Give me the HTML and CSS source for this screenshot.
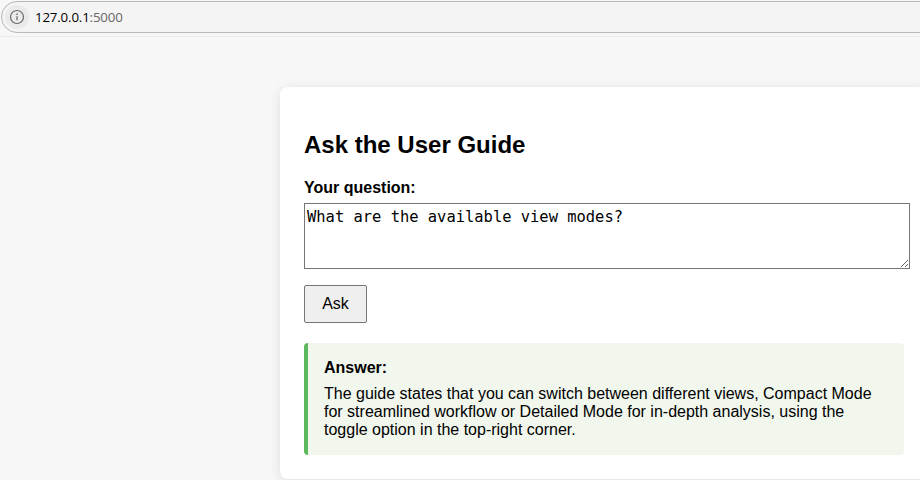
FILE: index.html
```html
<!DOCTYPE html>
<html lang="en">
<head>
<meta charset="utf-8">
<title>Ask the User Guide</title>
<link rel="stylesheet" href="styles.css">
</head>
<body>
<header class="toolbar">
  <div class="address">
    <span class="info">
      <svg width="16" height="16" viewBox="0 0 16 16" fill="none" stroke="#6b6b6b"><circle cx="8" cy="8" r="6.5" stroke-width="1.2"/><path d="M8 7.2v4" stroke-width="1.3"/><path d="M8 4.6v1.4" stroke-width="1.4"/></svg>
    </span>
    <span class="url">127.0.0.1<span class="port">:5000</span></span>
  </div>
</header>
<main class="card">
  <h2>Ask the User Guide</h2>
  <form>
    <label for="question">Your question:</label>
    <textarea id="question" spellcheck="false">What are the available view modes?</textarea>
    <button type="button">Ask</button>
  </form>
  <section class="answer">
    <strong>Answer:</strong>
    <p>The guide states that you can switch between different views, Compact Mode for streamlined workflow or Detailed Mode for in-depth analysis, using the toggle option in the top-right corner.</p>
  </section>
</main>
</body>
</html>
```
FILE: styles.css
```css
body {
  margin: 0;
  height: 480px;
  overflow: hidden;
  background: #f7f7f7;
  color: #000;
  font: 16px/18px "Liberation Sans", Arial, sans-serif;
}
.toolbar {
  box-sizing: border-box;
  height: 37px;
  padding-top: 1px;
  border-bottom: 1px solid #ebebeb;
  overflow: hidden;
}
.address {
  box-sizing: border-box;
  display: flex;
  align-items: center;
  gap: 6px;
  width: 960px;
  height: 32px;
  margin-left: 1px;
  padding-left: 3px;
  border: 1px solid #b8b8b8;
  border-radius: 16px;
  background: #f4f4f4;
}
.info {
  display: flex;
  align-items: center;
  justify-content: center;
  width: 24px;
  height: 24px;
  border-radius: 50%;
  background: #eaeaea;
}
.url {
  font: 13.3px/18px "Open Sans", "Noto Sans", sans-serif;
  letter-spacing: -0.17px;
}
.port { color: #666; }
.card {
  width: 600px;
  height: 344px;
  margin: 50px 0 0 280px;
  padding: 24px;
  border-radius: 8px;
  background: #fff;
  box-shadow: 0 2px 12px rgba(0, 0, 0, 0.1);
}
h2 {
  margin: 20px 0;
  font-size: 24px;
  line-height: 28px;
}
label {
  display: block;
  margin-bottom: 6px;
  font-weight: bold;
}
textarea {
  box-sizing: border-box;
  display: block;
  width: 606px;
  height: 66px;
  margin: 0 0 16px;
  padding: 3px 2px 2px;
  border: 1px solid #767676;
  border-radius: 0;
  color: #000;
  font: 15.45px/20px "DejaVu Sans Mono", monospace;
  resize: both;
}
button {
  display: block;
  width: 63px;
  height: 38px;
  padding: 0;
  border: 1px solid #767676;
  border-radius: 2px;
  background: #efefef;
  color: #000;
  font: 16px/18px "Liberation Sans", Arial, sans-serif;
}
.answer {
  box-sizing: border-box;
  height: 112px;
  margin-top: 20px;
  padding: 16px;
  border-left: 4px solid #5cb85c;
  border-radius: 4px;
  background: #f1f7ed;
}
.answer strong { display: block; }
.answer p { margin: 8px 0 0; }
```
